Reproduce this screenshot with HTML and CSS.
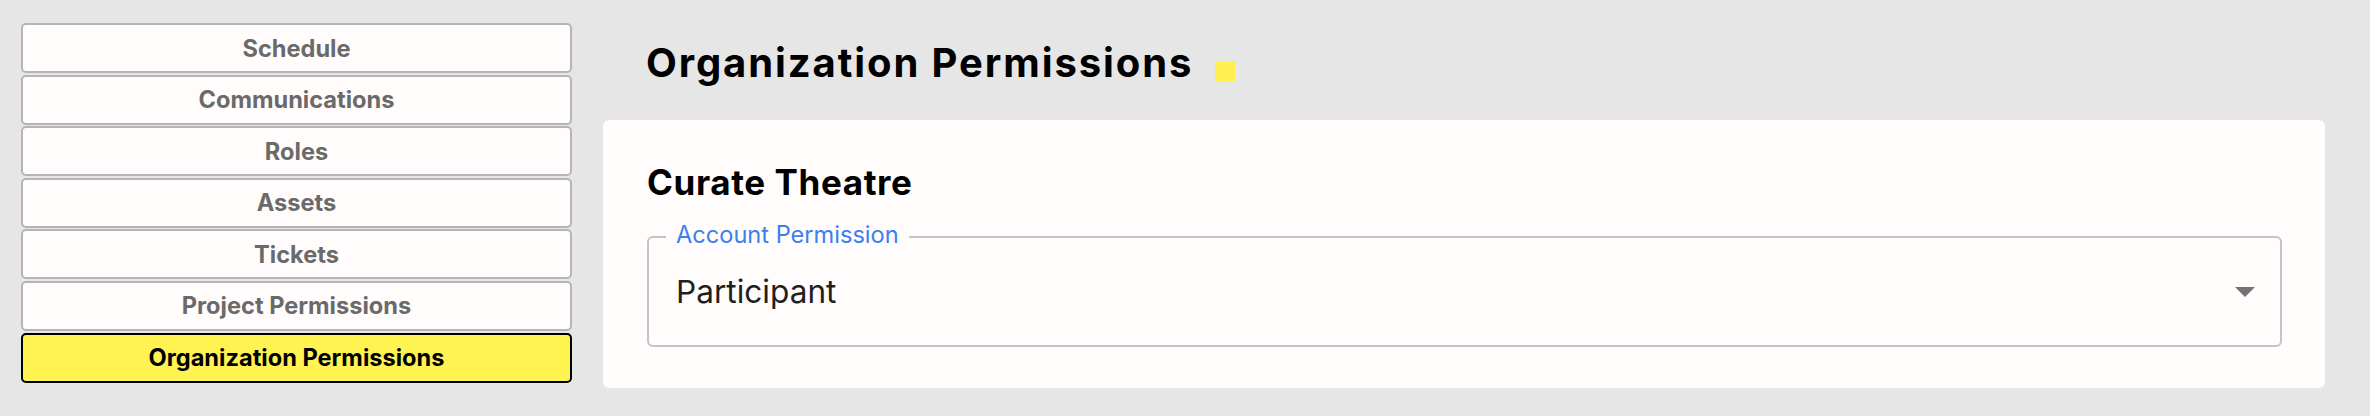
FILE: index.html
```html
<!DOCTYPE html>
<html>
	<head>
		<meta charset="utf-8">
		<title>Organization Permissions</title>
		<link rel="stylesheet" href="styles.css">
	</head>
	<body>
		<div class="page">
			<nav class="side-nav">
				<button class="nav-btn">Schedule</button>
				<button class="nav-btn">Communications</button>
				<button class="nav-btn">Roles</button>
				<button class="nav-btn">Assets</button>
				<button class="nav-btn">Tickets</button>
				<button class="nav-btn">Project Permissions</button>
				<button class="nav-btn active">Organization Permissions</button>
			</nav>
			<main class="content">
				<h1 class="page-title">Organization Permissions <span class="title-mark"></span></h1>
				<section class="card">
					<h2 class="org-name">Curate Theatre</h2>
					<div class="select-field">
						<label class="select-label">Account Permission</label>
						<span class="select-value">Participant</span>
						<svg class="select-arrow" width="20" height="10" viewBox="0 0 20 10">
							<path d="M0 0 L20 0 L10 10 Z" fill="#737373"/>
						</svg>
					</div>
				</section>
			</main>
		</div>
	</body>
</html>
```

FILE: styles.css
```css
* {
	margin: 0;
	padding: 0;
	box-sizing: border-box;
}
body {
	background: #e6e6e6;
	font-family: Inter, "Liberation Sans", sans-serif;
	color: #000;
}
.page {
	display: flex;
	padding: 23px 45px 0 21px;
	height: 416px;
}
.side-nav {
	width: 551px;
	display: flex;
	flex-direction: column;
	gap: 1.6px;
}
.nav-btn {
	height: 50px;
	border: 2px solid #b5b5b5;
	border-radius: 5px;
	background: #fffcfb;
	color: #6a6a6a;
	font-family: inherit;
	font-size: 23.6px;
	font-weight: 700;
	cursor: pointer;
}
.nav-btn.active {
	background: #fff352;
	border-color: #000;
	color: #000;
}
.content {
	flex: 1;
	margin-left: 31px;
}
.page-title {
	margin: 17px 0 34px 43px;
	font-size: 40px;
	font-weight: 700;
	letter-spacing: 1.9px;
	line-height: 46px;
}
.title-mark {
	display: inline-block;
	width: 20px;
	height: 20px;
	margin-left: 10px;
	vertical-align: -4px;
	background: #fff050;
}
.card {
	background: #fffcfb;
	border-radius: 6px;
	padding: 42px 43px 41px 44px;
}
.org-name {
	font-size: 35px;
	font-weight: 700;
	line-height: 41px;
	letter-spacing: 0.6px;
}
.select-field {
	position: relative;
	margin-top: 33px;
	height: 111px;
	border: 2px solid #c4c4c4;
	border-radius: 6px;
	display: flex;
	align-items: center;
	padding: 0 25px 0 27px;
}
.select-label {
	position: absolute;
	top: -17px;
	left: 17px;
	padding: 0 10px;
	background: #fffcfb;
	color: #3b7ff0;
	font-size: 23.6px;
	line-height: 28px;
}
.select-value {
	flex: 1;
	font-size: 31.6px;
	color: #1f1f1f;
}
```
